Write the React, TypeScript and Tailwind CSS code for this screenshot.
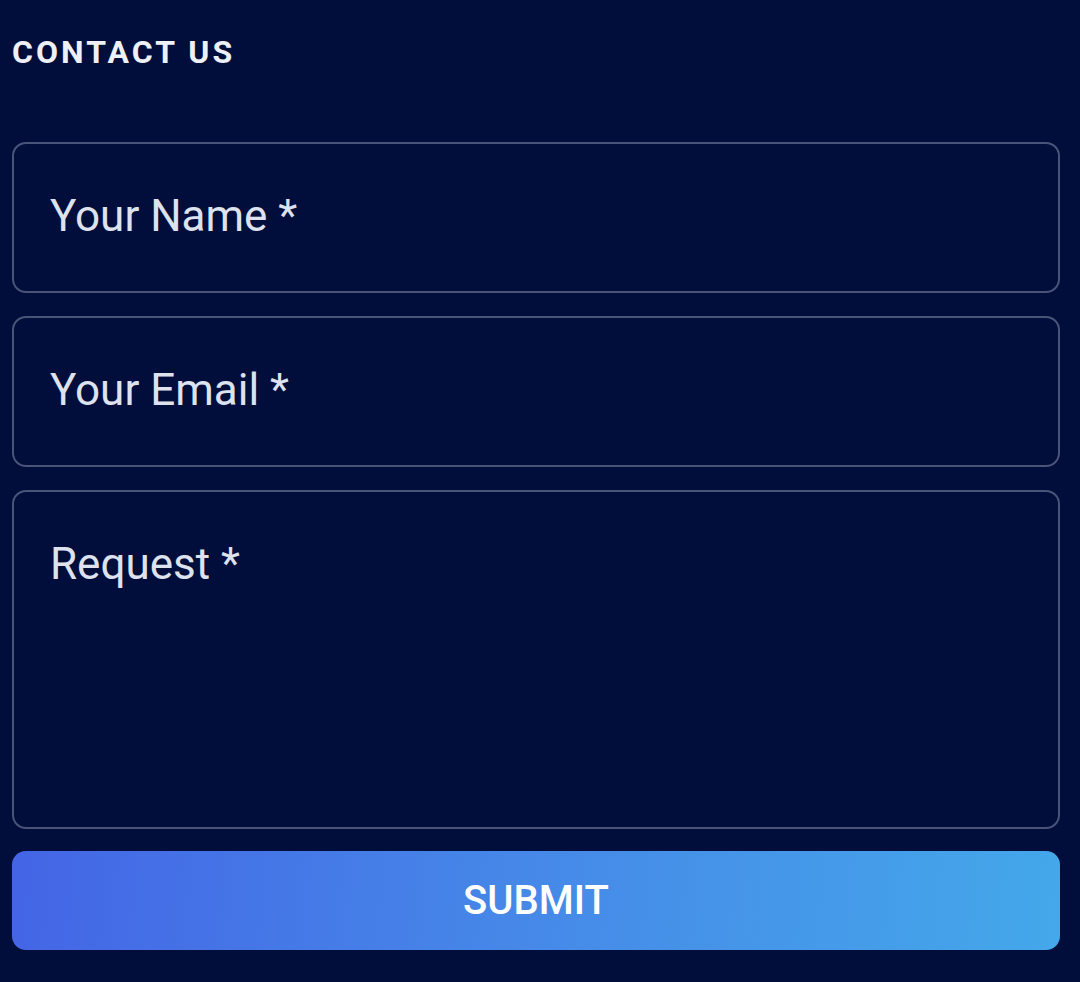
export default function App() {
  return (
    <div className="min-h-[982px] w-[1080px] bg-[#010e3b] pl-3 pr-5 pt-[34px] font-['Roboto',sans-serif]">
      <h2 className="text-[32px] font-bold tracking-[0.095em] text-[#eef0f6] leading-[36px]">CONTACT US</h2>

      <form className="mt-[72px] flex flex-col gap-[23px]">
        <div className="h-[151px] rounded-[14px] border-2 border-[#4a5478] px-[36px] pt-[47px]">
          <span className="text-[44px] leading-[50px] text-[#dde2ee]">Your Name *</span>
        </div>
        <div className="h-[151px] rounded-[14px] border-2 border-[#4a5478] px-[36px] pt-[47px]">
          <span className="text-[44px] leading-[50px] text-[#dde2ee]">Your Email *</span>
        </div>
        <div className="h-[339px] rounded-[14px] border-2 border-[#4a5478] px-[36px] pt-[47px]">
          <span className="text-[44px] leading-[50px] text-[#dde2ee]">Request *</span>
        </div>
        <button
          type="button"
          className="-mt-px h-[99px] rounded-[14px] bg-[linear-gradient(96deg,#4465e6_0%,#4689e8_50%,#44a8ea_100%)] text-[40px] font-medium text-white"
        >
          SUBMIT
        </button>
      </form>
    </div>
  );
}
